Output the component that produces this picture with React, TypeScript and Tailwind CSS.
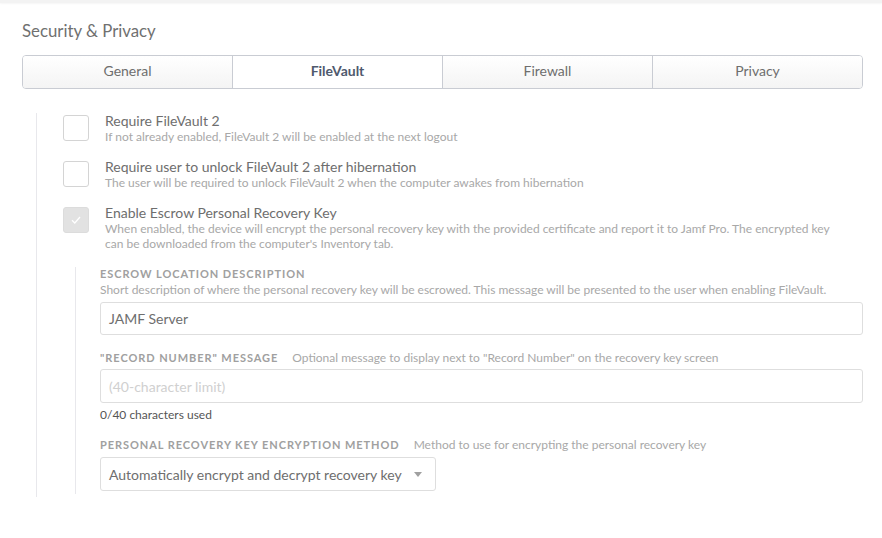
import React from "react";

const font = { fontFamily: "Lato, 'Open Sans', sans-serif" };

function Checkbox({ checked }: { checked?: boolean }) {
  if (checked) {
    return (
      <div className="w-[26px] h-[26px] shrink-0 rounded-[3px] bg-[#e2e2e2] border border-[#dcdcdc] flex items-center justify-center">
        <svg width="10" height="8" viewBox="0 0 10 8" fill="none">
          <path d="M1 4.2 L3.8 7 L9 1" stroke="#ffffff" strokeWidth="1.3" />
        </svg>
      </div>
    );
  }
  return <div className="w-[26px] h-[26px] shrink-0 rounded-[3px] bg-white border border-[#d4d4d4]" />;
}

function Row({ title, desc, checked }: { title: string; desc: React.ReactNode; checked?: boolean }) {
  return (
    <div className="flex items-start gap-4">
      <Checkbox checked={checked} />
      <div className="mt-[-2px]">
        <div className="text-[14px] leading-[16px] text-[#6e6e6e]">{title}</div>
        <div className="text-[12px] leading-[15px] text-[#a8a8a8] max-w-[736px]">{desc}</div>
      </div>
    </div>
  );
}

const label = "text-[11px] leading-[14px] font-bold tracking-[0.085em] text-[#a0a0a0]";
const help = "text-[12px] leading-[15px] text-[#a8a8a8]";

export default function App() {
  const tabs = ["General", "FileVault", "Firewall", "Privacy"];
  return (
    <div className="w-[882px] h-[538px] bg-white overflow-hidden" style={font}>
      <div className="h-[3px] bg-[#f3f3f3] shadow-[0_1px_2px_rgba(0,0,0,0.04)]" />
      <div className="pl-[22px] pr-[19px] pt-[18px]">
        <div className="text-[16.8px] leading-[20px] text-[#707070]">Security &amp; Privacy</div>
        <div className="mt-[14px] flex h-[34px] border border-[#c9ccd3] rounded-[4px] overflow-hidden">
          {tabs.map((t, i) => (
            <div
              key={t}
              className={
                "flex-1 flex items-center justify-center pb-[3px] text-[14px] " +
                (i > 0 ? "border-l border-[#c9ccd3] " : "") +
                (t === "FileVault"
                  ? "bg-white text-[#4f5a6e] font-bold"
                  : "bg-gradient-to-b from-white to-[#f4f4f4] text-[#6e6e6e]")
              }
            >
              {t}
            </div>
          ))}
        </div>
        <div className="mt-[24px] ml-[14px] border-l border-[#e8e8ec] pl-[26px] pt-[2px] pb-[3px]">
          <div className="flex flex-col gap-[17px]">
            <Row title="Require FileVault 2" desc="If not already enabled, FileVault 2 will be enabled at the next logout" />
            <Row
              title="Require user to unlock FileVault 2 after hibernation"
              desc="The user will be required to unlock FileVault 2 when the computer awakes from hibernation"
            />
            <Row
              checked
              title="Enable Escrow Personal Recovery Key"
              desc="When enabled, the device will encrypt the personal recovery key with the provided certificate and report it to Jamf Pro. The encrypted key can be downloaded from the computer's Inventory tab."
            />
          </div>
          <div className="mt-[16px] ml-[12px] border-l border-[#e8e8ec] pl-[24px] pb-[3px]">
            <div className={label}>ESCROW LOCATION DESCRIPTION</div>
            <div className={help + " mt-[1px]"}>
              Short description of where the personal recovery key will be escrowed. This message will be presented to the user when enabling FileVault.
            </div>
            <div className="mt-[5px] h-[33px] border border-[#dedede] rounded-[3px] flex items-center px-[8px] text-[14px] text-[#6e6e6e]">
              JAMF Server
            </div>
            <div className="mt-[15px] flex items-baseline gap-[14px]">
              <span className={label}>"RECORD NUMBER" MESSAGE</span>
              <span className={help}>Optional message to display next to "Record Number" on the recovery key screen</span>
            </div>
            <div className="mt-[4px] h-[34px] border border-[#dedede] rounded-[3px] flex items-center px-[8px] text-[14px] text-[#d0d0d0]">
              (40-character limit)
            </div>
            <div className="mt-[4px] text-[12px] leading-[15px] text-[#555]">0/40 characters used</div>
            <div className="mt-[15px] flex items-baseline gap-[14px]">
              <span className={label}>PERSONAL RECOVERY KEY ENCRYPTION METHOD</span>
              <span className={help}>Method to use for encrypting the personal recovery key</span>
            </div>
            <div className="mt-[5px] w-[336px] h-[34px] border border-[#dedede] rounded-[3px] flex items-center pl-[8px] pr-[13px] text-[14px] text-[#6e6e6e]">
              <span className="flex-1">Automatically encrypt and decrypt recovery key</span>
              <svg width="8" height="5" viewBox="0 0 8 5">
                <path d="M0 0 L8 0 L4 5 Z" fill="#a0a0a0" />
              </svg>
            </div>
          </div>
        </div>
      </div>
    </div>
  );
}
